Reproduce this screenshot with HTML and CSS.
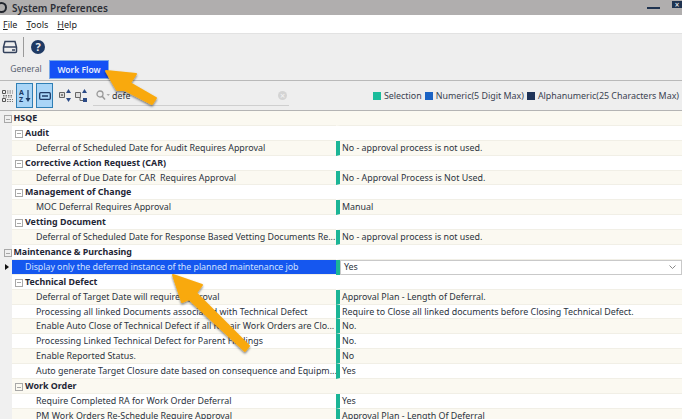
FILE: index.html
```html
<!DOCTYPE html>
<html>

<head>
  <meta charset="UTF-8" />
  <title>System Preferences</title>
  <link rel="stylesheet" href="styles.css">
</head>

<body>
  <div class="titlebar">
    <span class="app-icon"></span>
    <span class="title">System Preferences</span>
    <span class="win-min"></span>
    <span class="win-close">×</span>
  </div>

  <div class="menubar">
    <span><u>F</u>ile</span>
    <span><u>T</u>ools</span>
    <span><u>H</u>elp</span>
  </div>

  <div class="toolbar">
    <svg class="tool-print" width="16" height="14" viewBox="0 0 16 14">
      <path d="M3 1.5h10l1.5 5.5v4.5a1 1 0 0 1-1 1h-11a1 1 0 0 1-1-1V7z" fill="none" stroke="#33415c" stroke-width="1.5" />
      <path d="M1.5 7h13" stroke="#33415c" stroke-width="1.5" />
      <path d="M10 10h3" stroke="#33415c" stroke-width="1.5" />
    </svg>
    <span class="tool-sep"></span>
    <span class="help-btn">?</span>
  </div>

  <div class="tabs">
    <span class="tab">General</span>
    <span class="tab active">Work Flow</span>
  </div>

  <div class="filterbar">
    <svg class="grid-icon" width="11" height="14" viewBox="0 0 11 14">
      <path d="M0.500 1.500h3v3h-3zM0.500 9.500h3v3h-3z" fill="none" stroke="#555" />
      <path d="M5 2h6M5 4h6M1 6.500h10M1 8h10M5 10.500h6M5 12.500h6" stroke="#777" stroke-dasharray="1.500 1" />
    </svg>
    <span class="toggle first">
      <svg width="12" height="14" viewBox="0 0 12 14">
        <text x="0" y="6" class="az">A</text>
        <text x="0" y="13" class="az">Z</text>
        <path d="M9 1v10" stroke="#1f3a64" stroke-width="1.2" />
        <path d="M6.500 9l2.500 4 2.500-4z" fill="#1f3a64" />
      </svg>
    </span>
    <span class="toggle">
      <svg width="12" height="8" viewBox="0 0 12 8">
        <rect x="0.700" y="0.700" width="10.600" height="6.600" rx="1" fill="none" stroke="#1f3a64" stroke-width="1.300" />
        <path d="M3 4h6" stroke="#1f3a64" stroke-width="1.500" />
      </svg>
    </span>
    <svg class="expand-icon" width="12" height="13" viewBox="0 0 12 13">
      <path d="M0.500 3.500h5v5h-5z" fill="#ddd" stroke="#666" />
      <path d="M2 6h2" stroke="#333" />
      <path d="M9.500 0l2.500 4H7zM9.500 13L7 9h5z" fill="#2b4a86" />
    </svg>
    <svg class="collapse-icon" width="12" height="13" viewBox="0 0 12 13">
      <path d="M0.500 3.500h5v5h-5z" fill="#ddd" stroke="#666" />
      <path d="M5 8.500v3h3" fill="none" stroke="#666" />
      <path d="M9.500 0l2.500 4H7z" fill="#2b4a86" />
      <path d="M8 9h4v4H8z" fill="#2b4a86" />
    </svg>
    <div class="search">
      <svg width="14" height="10" viewBox="0 0 14 10">
        <circle cx="4" cy="4" r="3" fill="none" stroke="#999" stroke-width="1.300" />
        <path d="M6 6l3 3.500" stroke="#999" stroke-width="1.500" />
        <path d="M10.500 4h3.500l-1.750 2z" fill="#aaa" />
      </svg>
      <span class="search-text">defe</span>
      <span class="search-clear">×</span>
    </div>
    <div class="legend">
      <i class="swatch teal"></i><span>Selection</span>
      <i class="swatch blue"></i><span>Numeric(5 Digit Max)</span>
      <i class="swatch navy"></i><span>Alphanumeric(25 Characters Max)</span>
    </div>
  </div>

  <div class="prefs">
    <div class="row"><span class="cell-name lv0 group"><i class="box"></i>HSQE</span><span class="cell-val"></span></div>
    <div class="row"><span class="cell-name lv1 group"><i class="box"></i>Audit</span><span class="cell-val"></span></div>
    <div class="row"><span class="cell-name leaf">Deferral of Scheduled Date for Audit Requires Approval</span><span class="cell-val mark">No - approval process is not used.</span></div>
    <div class="row"><span class="cell-name lv1 group"><i class="box"></i>Corrective Action Request (CAR)</span><span class="cell-val"></span></div>
    <div class="row"><span class="cell-name leaf">Deferral of Due Date for CAR&nbsp; Requires Approval</span><span class="cell-val mark">No - Approval Process is Not Used.</span></div>
    <div class="row"><span class="cell-name lv1 group"><i class="box"></i>Management of Change</span><span class="cell-val"></span></div>
    <div class="row"><span class="cell-name leaf">MOC Deferral Requires Approval</span><span class="cell-val mark">Manual</span></div>
    <div class="row"><span class="cell-name lv1 group"><i class="box"></i>Vetting Document</span><span class="cell-val"></span></div>
    <div class="row"><span class="cell-name leaf">Deferral of Scheduled Date for Response Based Vetting Documents Re...</span><span class="cell-val mark">No - approval process is not used.</span></div>
    <div class="row"><span class="cell-name lv0 group"><i class="box"></i>Maintenance &amp; Purchasing</span><span class="cell-val"></span></div>
    <div class="row selected"><i class="caret"></i><span class="cell-name lv1">Display only the deferred instance of the planned maintenance job</span><span class="cell-val mark"><span class="editor">Yes<svg width="7" height="4" viewBox="0 0 7 4"><path d="M0.500 0.500l3 3 3-3" fill="none" stroke="#888" /></svg></span></span></div>
    <div class="row"><span class="cell-name lv1 group"><i class="box"></i>Technical Defect</span><span class="cell-val"></span></div>
    <div class="row"><span class="cell-name leaf">Deferral of Target Date will require Approval</span><span class="cell-val mark">Approval Plan - Length of Deferral.</span></div>
    <div class="row"><span class="cell-name leaf">Processing all linked Documents associated with Technical Defect</span><span class="cell-val mark">Require to Close all linked documents before Closing Technical Defect.</span></div>
    <div class="row"><span class="cell-name leaf">Enable Auto Close of Technical Defect if all Repair Work Orders are Clo...</span><span class="cell-val mark">No.</span></div>
    <div class="row"><span class="cell-name leaf">Processing Linked Technical Defect for Parent Findings</span><span class="cell-val mark">No.</span></div>
    <div class="row"><span class="cell-name leaf">Enable Reported Status.</span><span class="cell-val mark">No</span></div>
    <div class="row"><span class="cell-name leaf">Auto generate Target Closure date based on consequence and Equipm...</span><span class="cell-val mark">Yes</span></div>
    <div class="row"><span class="cell-name lv1 group"><i class="box"></i>Work Order</span><span class="cell-val"></span></div>
    <div class="row"><span class="cell-name leaf">Require Completed RA for Work Order Deferral</span><span class="cell-val mark">Yes</span></div>
    <div class="row"><span class="cell-name leaf">PM Work Orders Re-Schedule Require Approval</span><span class="cell-val mark">Approval Plan - Length Of Deferral</span></div>
  </div>

  <!-- callout arrows drawn over the screenshot -->
  <svg class="callouts" width="682" height="419" viewBox="0 0 682 419">
    <defs>
      <filter id="shadow" x="-20%" y="-20%" width="140%" height="140%">
        <feDropShadow dx="0" dy="1.500" stdDeviation="1.200" flood-color="#000" flood-opacity="0.500" />
      </filter>
    </defs>
    <path filter="url(#shadow)" fill="#f9a90c" stroke="#f9a90c" stroke-width="2" stroke-linejoin="round"
      d="M106 71L136 74L130 83L156 98L152 104L125 90L117 90z" />
    <path filter="url(#shadow)" fill="#f9a90c" stroke="#f9a90c" stroke-width="2" stroke-linejoin="round"
      d="M173 275L202 285L196 293L249 346L245 351L189 299L182 302z" />
  </svg>
</body>

</html>
```

FILE: styles.css
```css
html,
body {
  margin: 0;
  height: 419px;
  overflow: hidden;
}

body {
  position: relative;
  width: 682px;
  background: #fff;
  font-family: "Noto Sans", "Open Sans", sans-serif;
  font-size: 8.900px;
  color: #2c3440;
}

/* Title bar */
.titlebar {
  display: flex;
  align-items: center;
  height: 15px;
  background: #b0aeae;
  overflow: hidden;
}

.app-icon {
  width: 7px;
  height: 7px;
  margin-left: -4px;
  border: 2px solid #22262e;
  border-radius: 50%;
  flex: none;
}

.title {
  margin-left: 5px;
  font-size: 10px;
  font-weight: 600;
  color: #2c2f36;
}

.win-min {
  width: 13px;
  height: 2px;
  margin-left: auto;
  margin-top: 1px;
  background: #1f3350;
}

.win-close {
  width: 10px;
  height: 7px;
  margin: -7px 0 0 12px;
  background: #1f3350;
  color: #fff;
  font-size: 8px;
  line-height: 7px;
  text-align: center;
}

/* Menu */
.menubar {
  display: flex;
  gap: 9px;
  align-items: center;
  height: 18px;
  padding-left: 3px;
  background: #fff;
  font-size: 9px;
  color: #222;
}

/* Toolbars */
.toolbar {
  display: flex;
  align-items: center;
  height: 27px;
  padding-left: 2px;
  background: #eeeeee;
  border-top: 1px solid #e2e2e2;
  box-sizing: border-box;
}

.tool-sep {
  width: 1px;
  height: 20px;
  margin: 0 7px 0 5px;
  background: #9a9a9a;
}

.help-btn {
  width: 14px;
  height: 14px;
  border-radius: 50%;
  background: #1f3a64;
  color: #eee;
  font-size: 11px;
  font-weight: 700;
  line-height: 14px;
  text-align: center;
}

.tabs {
  display: flex;
  align-items: flex-end;
  height: 20px;
  padding-left: 5px;
  background: #eeeeee;
  border-bottom: 1px solid #b9b9b9;
}

.tab {
  width: 42px;
  height: 19px;
  margin-bottom: 1px;
  color: #5a6270;
  font-size: 8.500px;
  line-height: 18px;
  text-align: center;
}

.tab.active {
  width: 60px;
  margin-left: 2px;
  box-sizing: border-box;
  background: #1450f5;
  border: 1px solid #7aa8e8;
  color: #e8eefc;
  font-weight: 600;
}

.filterbar {
  display: flex;
  align-items: center;
  height: 29px;
  padding-left: 2px;
  background: #eeeeee;
  border-bottom: 1px solid #b4b4b4;
}

.toggle {
  display: flex;
  align-items: center;
  justify-content: center;
  width: 15px;
  height: 23px;
  margin-left: 3px;
  background: #a9d5f7;
  border: 1px solid #2f7fb5;
}

.toggle.first {
  margin-left: 3px;
}

.az {
  font-size: 7px;
  font-weight: 700;
  fill: #1f3a64;
}

.expand-icon {
  margin-left: 6px;
}

.collapse-icon {
  margin-left: 4px;
}

.search {
  display: flex;
  align-items: center;
  width: 196px;
  height: 20px;
  margin-left: 6px;
  padding: 0 2px 0 3px;
  box-sizing: border-box;
  border-bottom: 1px solid #cfcfcf;
}

.search-text {
  margin-left: 2px;
  color: #333;
}

.search-clear {
  width: 9px;
  height: 9px;
  margin-left: auto;
  border-radius: 50%;
  background: #d4d4d4;
  color: #f4f4f4;
  font-size: 9px;
  line-height: 9px;
  text-align: center;
}

.legend {
  display: flex;
  align-items: center;
  margin-left: auto;
  padding-right: 3px;
  color: #3a4250;
}

.swatch {
  width: 8px;
  height: 8px;
  margin: 0 3px 0 3px;
}

.teal {
  background: #1bbc9b;
}

.blue {
  background: #1b63c4;
}

.navy {
  background: #1f3358;
}

/* Property grid */
.prefs {
  background: #f0f0f0;
}

.row {
  position: relative;
  display: flex;
  height: 14.900px;
  padding-left: 12px;
  line-height: 14px;
}

.cell-name {
  display: block;
  width: 324px;
  flex: none;
  box-sizing: border-box;
  overflow: hidden;
  white-space: nowrap;
  background: #fff;
  border-bottom: 1px solid #f1efe6;
}

.cell-val {
  flex: 1;
  box-sizing: border-box;
  padding-left: 6px;
  white-space: nowrap;
  background: #fff;
  border-bottom: 1px solid #f1efe6;
  border-left: 4px solid transparent;
}

.cell-val.mark {
  padding-left: 2px;
  border-left-color: #1bb596;
}

.row:nth-child(odd) .cell-name,
.row:nth-child(odd) .cell-val {
  background: #fbf9f1;
}

.lv0 {
  padding-left: 1.500px;
}

.lv1 {
  padding-left: 13px;
}

.leaf {
  padding-left: 24px;
}

.group {
  font-weight: 700;
  color: #1f2736;
}

.box {
  position: absolute;
  top: 4px;
  width: 6px;
  height: 6px;
  margin-left: -10px;
  border: 1px solid #a8a8a8;
  background: linear-gradient(#a8a8a8, #a8a8a8) center / 4px 1px no-repeat;
}

.row.selected .cell-name {
  background: #1557ef;
  color: #cfe0ff;
  letter-spacing: -0.060px;
}

.row.selected .cell-val {
  background: #fff;
  padding: 0;
  border-bottom: 0;
}

.editor {
  display: flex;
  align-items: center;
  justify-content: space-between;
  height: 100%;
  box-sizing: border-box;
  padding: 0 5px 0 3px;
  border: 1px solid #c9c9c9;
}

.caret {
  position: absolute;
  left: 5px;
  top: 4px;
  border-left: 4px solid #111;
  border-top: 3px solid transparent;
  border-bottom: 3px solid transparent;
}

.callouts {
  position: absolute;
  left: 0;
  top: 0;
  pointer-events: none;
}
```
